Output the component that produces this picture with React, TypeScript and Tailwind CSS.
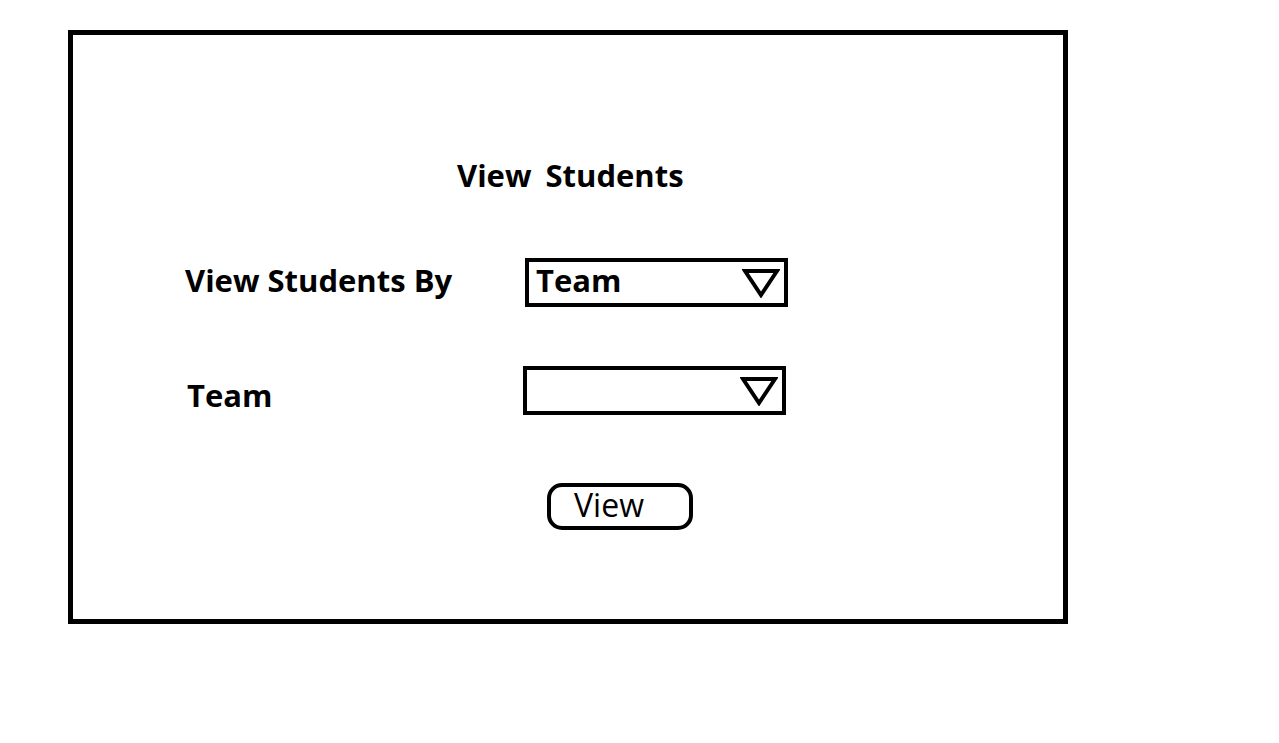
import React from "react";

function Caret() {
  return (
    <svg width="38" height="30" viewBox="0 0 38 30" className="shrink-0">
      <polygon points="3,3 35,3 19,27" fill="none" stroke="#000" strokeWidth="4" strokeLinejoin="miter" />
    </svg>
  );
}

function Select({ value }: { value?: string }) {
  return (
    <div className="flex h-[49px] w-[263px] items-center justify-between border-[4px] border-black pl-[7px] pr-[4px]">
      <span className="-mt-[4px] text-[31px] font-bold leading-none">{value ?? ""}</span>
      <Caret />
    </div>
  );
}

export default function App() {
  return (
    <div className="min-h-[743px] bg-white pl-[68px] pt-[30px] text-black" style={{ fontFamily: '"Open Sans", "Noto Sans", sans-serif' }}>
      <div className="flex h-[594px] w-[1000px] flex-col border-[5px] border-black">
        <h1 className="ml-[384px] mt-[125px] text-[31px] font-bold leading-none [word-spacing:6px]">View Students</h1>

        {/* row 1 */}
        <div className="mt-[67px] flex items-start">
          <label className="ml-[112px] mt-[7px] w-[340px] text-[31px] font-bold leading-none">View Students By</label>
          <Select value="Team" />
        </div>

        {/* row 2 */}
        <div className="mt-[59px] flex items-start">
          <label className="ml-[114px] mt-[14px] w-[336px] text-[31px] font-bold leading-none">Team</label>
          <Select />
        </div>

        <button
          type="button"
          className="ml-[474px] mt-[68px] flex h-[47px] w-[146px] items-center rounded-[15px] border-[4px] border-black pb-[3px] pl-[23px] text-[32px] leading-none"
        >
          View
        </button>
      </div>
    </div>
  );
}
